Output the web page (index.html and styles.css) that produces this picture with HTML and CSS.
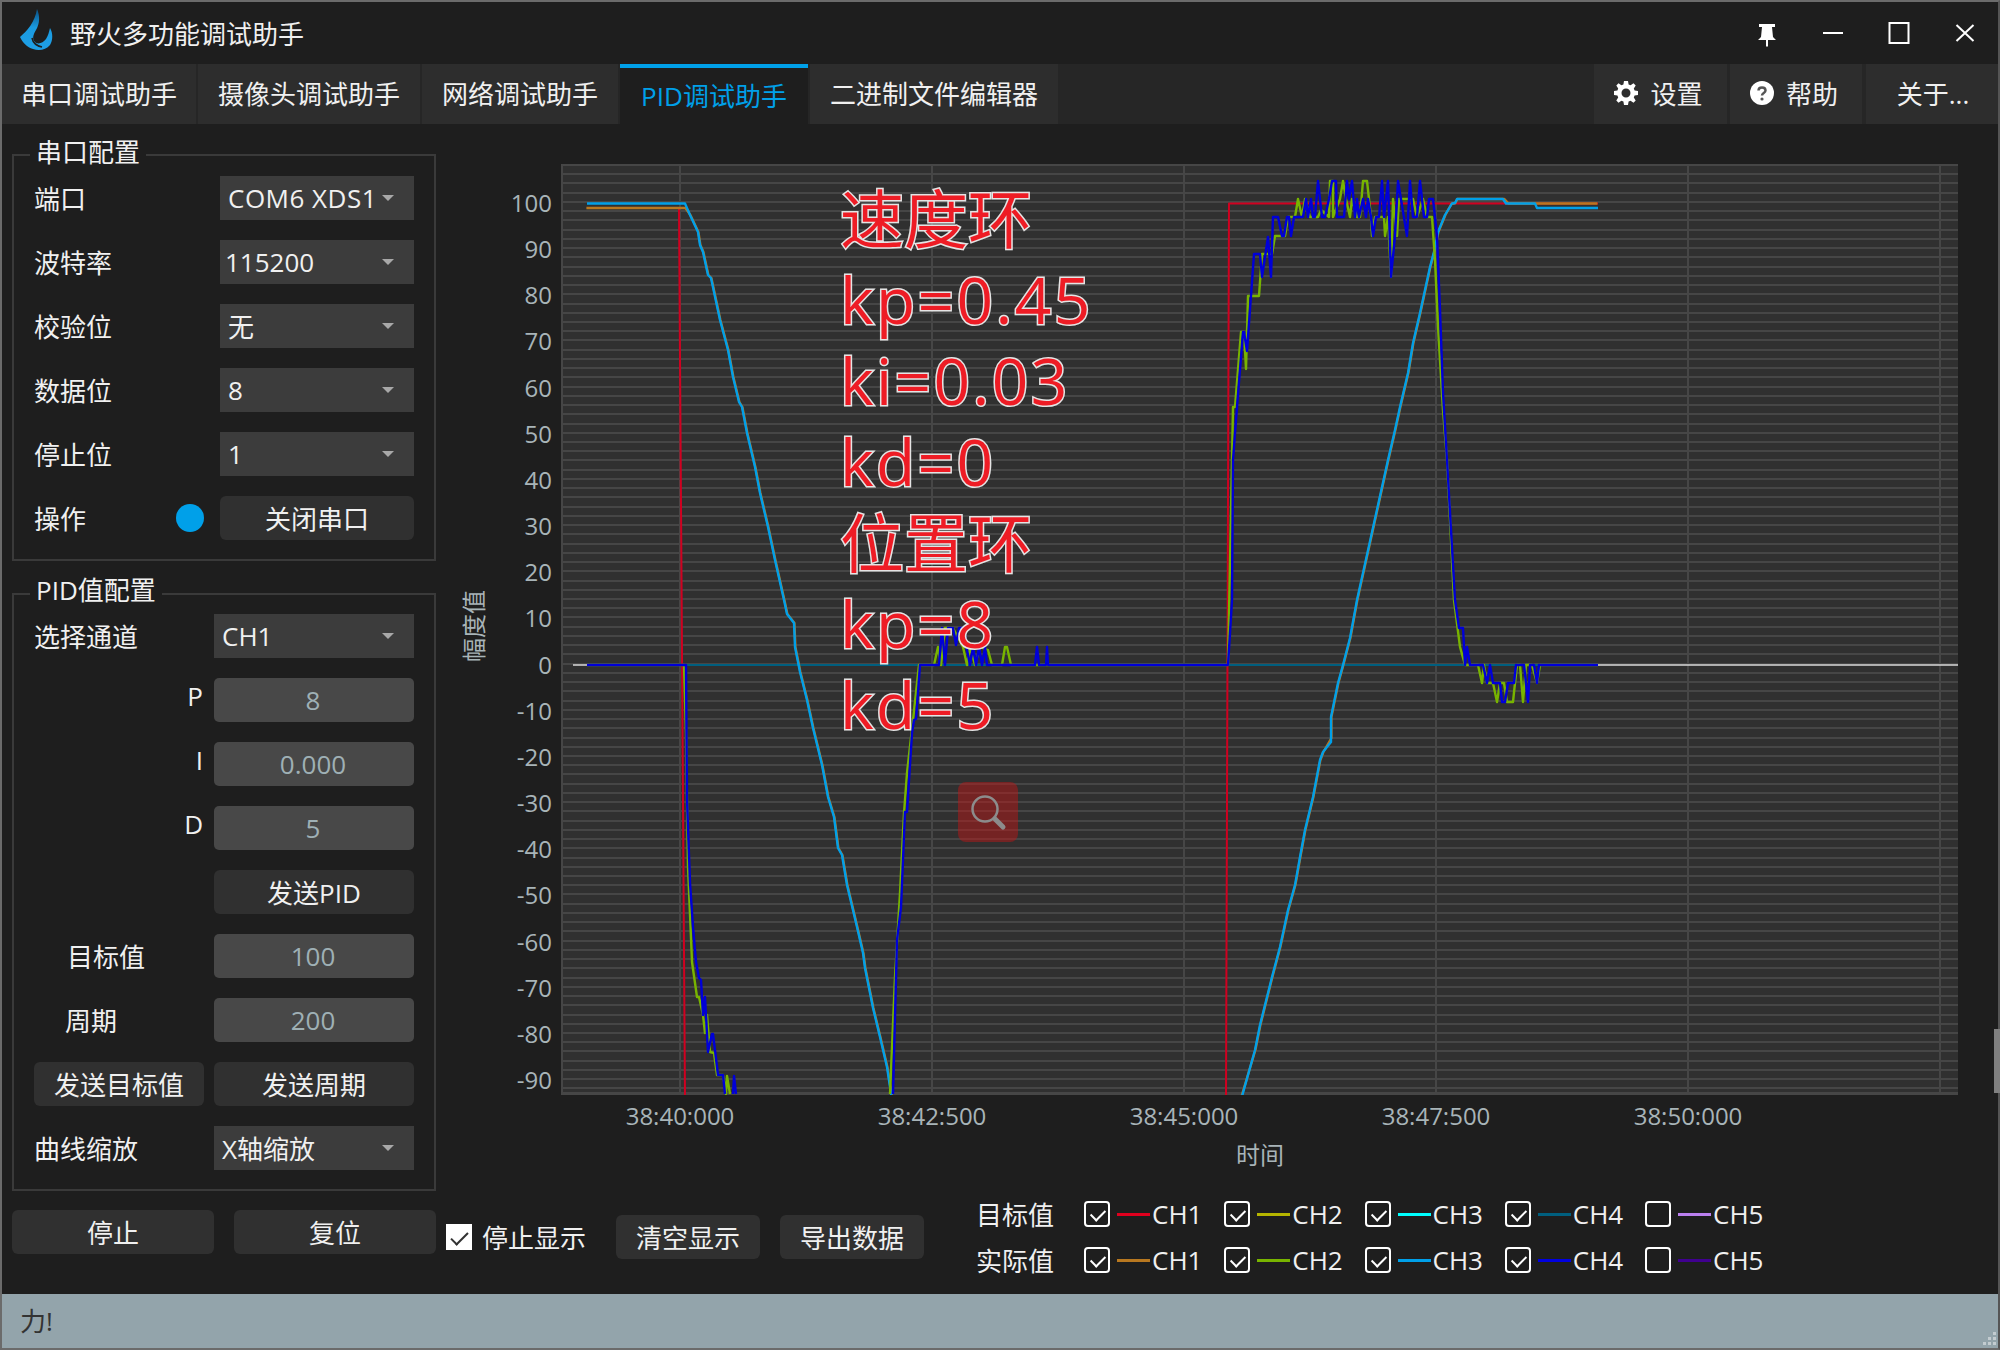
FILE: index.html
```html
<!DOCTYPE html>
<html lang="zh-CN">
<head>
  <meta charset="UTF-8">
  <title>野火多功能调试助手</title>
  <link rel="stylesheet" href="styles.css">
</head>
<body>
  <div class="window">
    <header class="titlebar">
      <svg class="logo" viewBox="0 0 60 60">
        <defs>
          <linearGradient id="flame" x1="0" y1="0" x2="0" y2="1">
            <stop offset="0.1" stop-color="#0d5f96"/>
            <stop offset="0.45" stop-color="#1a9be0"/>
            <stop offset="1" stop-color="#1f9fe6"/>
          </linearGradient>
        </defs>
        <path fill="url(#flame)" d="M27 7C30 14 30 21 26 28C23 33 22 37 25 40C28 43 33 41 36 37C38 34 39 30 40 26C43 31 43 38 40 43C36 48 29 49 23 47C17 45 13 41 10 35C17 29 25 20 27 7z"/>
        <path fill="none" stroke="#1e1e1e" stroke-width="1.500" d="M22 36C23 41 27 44 32 45"/>
      </svg>
      <span class="app-name">野火多功能调试助手</span>
      <div class="win-btns">
        <svg class="win-btn" viewBox="0 0 52 52"><path fill="#fff" d="M18 17h16v3h-3l1 10 3 3H17l3-3 1-10h-3zM25 33h2v6l-1 1-1-1z"/></svg>
        <svg class="win-btn" viewBox="0 0 52 52"><path stroke="#fff" stroke-width="2" d="M16 26h20"/></svg>
        <svg class="win-btn" viewBox="0 0 52 52"><rect x="16.500" y="16" width="19" height="20" fill="none" stroke="#fff" stroke-width="2"/></svg>
        <svg class="win-btn" viewBox="0 0 52 52"><path stroke="#fff" stroke-width="2" d="M17.500 18l17 16M34.500 18l-17 16"/></svg>
      </div>
    </header>

    <nav class="tabbar">
      <div class="tab tab-serial">串口调试助手</div>
      <div class="tab tab-camera">摄像头调试助手</div>
      <div class="tab tab-net">网络调试助手</div>
      <div class="tab tab-pid active">PID调试助手</div>
      <div class="tab tab-bin">二进制文件编辑器</div>
      <div class="tab-actions">
        <div class="tab tab-set">
          <svg class="tab-icon" viewBox="0 0 24 24"><path fill="#fff" fill-rule="evenodd" d="M10 0h4l.6 3.400 2 .8L19.500 2.300l2.200 2.200-1.900 2.900.8 2 3.400.6v4l-3.400.6-.8 2 1.900 2.900-2.200 2.200-2.900-1.900-2 .8L14 24h-4l-.6-3.400-2-.8-2.900 1.900-2.200-2.200 1.900-2.900-.8-2L0 14v-4l3.400-.6.8-2-1.900-2.900 2.200-2.200 2.900 1.900 2-.8zM12 7.500a4.500 4.500 0 1 0 0 9 4.500 4.500 0 0 0 0-9z"/></svg>
          设置
        </div>
        <div class="tab tab-help">
          <svg class="tab-icon" viewBox="0 0 24 24"><circle cx="12" cy="12" r="12" fill="#fff"/><path fill="none" stroke="#555" stroke-width="2.500" d="M8.500 9.500c0-4 7-4 7 0 0 2.500-3.500 2.500-3.500 5"/><circle cx="12" cy="18" r="1.600" fill="#555"/></svg>
          帮助
        </div>
        <div class="tab tab-about">关于...</div>
      </div>
    </nav>

    <main class="content">
      <aside class="side">
        <section class="group group-port">
          <h2 class="group-title">串口配置</h2>
          <div class="form form-port">
            <label class="lbl">端口</label>
            <div class="combo"><span class="combo-text clip">COM6 XDS110 Class</span></div>
            <label class="lbl">波特率</label>
            <div class="combo"><span class="combo-text baud">115200</span></div>
            <label class="lbl">校验位</label>
            <div class="combo"><span class="combo-text">无</span></div>
            <label class="lbl">数据位</label>
            <div class="combo"><span class="combo-text">8</span></div>
            <label class="lbl">停止位</label>
            <div class="combo"><span class="combo-text">1</span></div>
            <div class="lbl lbl-dot">操作<span class="led"></span></div>
            <button class="btn">关闭串口</button>
          </div>
        </section>

        <section class="group group-pid">
          <h2 class="group-title">PID值配置</h2>
          <div class="form form-pid">
            <label class="lbl">选择通道</label>
            <div class="combo"><span class="combo-text">CH1</span></div>
            <label class="lbl lbl-r">P</label>
            <div class="input">8</div>
            <label class="lbl lbl-r">I</label>
            <div class="input">0.000</div>
            <label class="lbl lbl-r">D</label>
            <div class="input">5</div>
            <span></span>
            <button class="btn">发送PID</button>
            <label class="lbl lbl-target">目标值</label>
            <div class="input">100</div>
            <label class="lbl lbl-period">周期</label>
            <div class="input">200</div>
            <button class="btn btn-target">发送目标值</button>
            <button class="btn">发送周期</button>
            <label class="lbl">曲线缩放</label>
            <div class="combo"><span class="combo-text">X轴缩放</span></div>
          </div>
        </section>

        <div class="run-btns">
          <button class="btn">停止</button>
          <button class="btn">复位</button>
        </div>
      </aside>

      <section class="right">
        <div class="chart">
          <div class="chart-top">
            <div class="y-title"><span>幅度值</span></div>
            <div class="y-labels">
              <span>100</span><span>90</span><span>80</span><span>70</span><span>60</span>
              <span>50</span><span>40</span><span>30</span><span>20</span><span>10</span>
              <span>0</span><span>-10</span><span>-20</span><span>-30</span><span>-40</span>
              <span>-50</span><span>-60</span><span>-70</span><span>-80</span><span>-90</span>
            </div>
            <div class="plot">
              <svg class="curves" viewBox="561 164 1397 931">
                <!-- zero axis -->
                <path class="axis-zero" d="M573 665H1958"/>
                <path class="s-teal" d="M587 665H1598"/>
                <!-- target, ch1 -->
                <path class="s-red" d="M587 208H679L685 1100M1226 1100L1229 203.500H1598"/>
                <!-- actual, ch1 and ch3 -->
                <polyline class="s-orange" points="587,208 686,208 691,215 699,232 701,245 704,252 709,275 712,278 721,320 729,350 734,377 740,402 743,407 748,433 756,467 761,493 769,527 776,560 785,600 788,614 795,623 796,647 801,672 808,700 814,728 823,765 829,797 835,817 839,848 843,855 848,885 858,927 864,953 866,968 874,1008 881,1037 888,1067 893,1100"/>
                <polyline class="s-orange" points="1241,1100 1256,1050 1261,1025 1273,977 1281,947 1289,910 1296,885 1301,857 1306,830 1314,797 1321,760 1324,752 1332,738 1332,717 1339,683 1344,665 1351,638 1358,600 1389,460 1396,430 1401,407 1409,373 1414,343 1421,313 1431,267 1436,248 1439,232 1446,215 1452,204 1456,203 1458,199 1505,199 1509,203.500 1598,203.500"/>
                <polyline class="s-sky" points="587,203.500 685,203.500 690,215 698,232 700,245 703,252 708,275 711,278 720,320 728,350 733,377 739,402 742,407 747,433 755,467 760,493 768,527 775,560 784,600 787,614 794,623 795,647 800,672 807,700 813,728 822,765 828,797 834,817 838,848 842,855 847,885 857,927 863,953 865,968 873,1008 880,1037 887,1067 892,1100"/>
                <polyline class="s-sky" points="1241,1100 1255,1050 1260,1025 1272,977 1280,947 1288,910 1295,885 1300,857 1305,830 1313,797 1320,760 1323,752 1331,742 1331,717 1338,683 1343,665 1350,638 1357,600 1388,460 1395,430 1400,407 1408,373 1413,343 1420,313 1430,267 1435,248 1438,232 1445,215 1452,203.500 1455,203 1457,199 1503,199 1506,203.500 1535,203.500 1537,208 1598,208"/>
                <!-- ch2 actual -->
                <polyline class="s-green" points="587,665 684,665 686,733 688,867 692,962 697,997 699,997 703,1015 705,1033 707,1015 710,1052 714,1053 717,1075 723,1075 726,1094 727,1076 730,1094"/>
                <polyline class="s-green" points="890,1094 895,977 900,893 904,813 907,773 913,720 919,665 934,665 938,647 941,665 945,628 953,628 963,647 967,665 970,647 975,665 980,647 988,650 992,665 1002,665 1005,647 1007,647 1011,665 1228,665 1232,460 1233,407 1235,407 1241,332 1244,332 1246,369 1248,296 1259,296 1262,254 1272,254 1275,236 1285,236 1288,217 1295,217 1298,199 1302,217 1305,199 1310,217 1318,217 1321,210 1329,217 1330,181 1333,181 1333,217 1340,199 1343,181 1346,199 1350,217 1352,199 1357,217 1360,217 1363,181 1367,181 1371,217 1372,236 1375,217 1384,217 1385,236 1388,217 1391,277 1393,199 1397,236 1399,199 1413,199 1417,217 1423,199 1427,217 1432,217 1435,260 1438,327 1443,410 1447,460 1454,600 1460,647 1465,665 1478,665 1482,683 1484,665 1487,683 1493,683 1497,702 1500,683 1504,683 1507,702 1513,702 1515,683 1517,665 1520,665 1523,702 1526,665 1530,665 1532,665 1537,683 1540,665 1598,665"/>
                <!-- ch4 actual -->
                <polyline class="s-blue" points="587,665 686,665 687,800 690,883 693,927 696,962 699,978 701,980 703,1015 705,997 708,1052 712,1034 713,1034 718,1075 723,1075 725,1094"/>
                <polyline class="s-blue" points="733,1094 734,1076 736,1094"/>
                <polyline class="s-blue" points="893,1094 897,940 901,907 905,812 907,812 912,733 914,720 916,719 920,665 939,665 942,628 945,665 948,628 953,628 956,645 959,628 964,628 967,650 970,665 973,647 976,665 979,647 982,665 985,647 987,665 1035,665 1037,647 1039,665 1046,665 1047,647 1048,665 1228,665 1230,633 1232,600 1233,460 1237,407 1243,332 1244,332 1247,351 1254,254 1260,254 1262,277 1268,237 1271,277 1273,217 1278,217 1282,236 1284,236 1287,217 1289,217 1291,236 1294,217 1303,217 1306,199 1308,217 1311,199 1313,217 1315,217 1318,181 1322,217 1325,217 1329,199 1332,181 1336,181 1337,217 1344,217 1347,181 1349,199 1352,181 1355,217 1357,199 1359,217 1363,199 1366,217 1368,199 1371,217 1373,236 1376,217 1379,217 1382,181 1384,217 1388,181 1391,277 1395,236 1398,181 1407,236 1410,181 1413,217 1417,217 1420,181 1424,217 1427,217 1429,199 1433,199 1435,217 1437,236 1440,310 1443,393 1447,460 1455,600 1459,628 1463,628 1465,665 1467,647 1470,665 1483,665 1487,683 1490,665 1493,683 1500,683 1502,702 1505,702 1508,683 1514,683 1516,665 1524,665 1528,702 1530,665 1534,665 1537,683 1539,665 1598,665"/>
              </svg>
              <div class="zoom-btn">
                <svg viewBox="0 0 60 60"><circle cx="27" cy="27" r="12.500" fill="none" stroke="#8c8c8c" stroke-width="2.500"/><path d="M37 37l8 8" stroke="#8c8c8c" stroke-width="5" stroke-linecap="round"/></svg>
              </div>
            </div>
          </div>
          <div class="x-labels">
            <span>38:40:000</span><span>38:42:500</span><span>38:45:000</span><span>38:47:500</span><span>38:50:000</span>
          </div>
          <div class="x-title">时间</div>
          <div class="note">速度环<br><span class="note-num">kp=0.45</span><br><span class="note-num">ki=0.03</span><br><span class="note-num">kd=0</span><br>位置环<br><span class="note-num">kp=8</span><br><span class="note-num">kd=5</span></div>
        </div>

        <div class="controls">
          <span class="check check-on"></span>
          <span class="stop-text">停止显示</span>
          <button class="btn btn-ctl">清空显示</button>
          <button class="btn btn-ctl">导出数据</button>
          <div class="legend">
            <span class="legend-name">目标值</span>
            <div class="item"><span class="check ticked"></span><i class="swatch c-red"></i>CH1</div>
            <div class="item"><span class="check ticked"></span><i class="swatch c-yellow"></i>CH2</div>
            <div class="item"><span class="check ticked"></span><i class="swatch c-cyan"></i>CH3</div>
            <div class="item"><span class="check ticked"></span><i class="swatch c-teal"></i>CH4</div>
            <div class="item"><span class="check"></span><i class="swatch c-lilac"></i>CH5</div>
            <span class="legend-name">实际值</span>
            <div class="item"><span class="check ticked"></span><i class="swatch c-orange"></i>CH1</div>
            <div class="item"><span class="check ticked"></span><i class="swatch c-green"></i>CH2</div>
            <div class="item"><span class="check ticked"></span><i class="swatch c-sky"></i>CH3</div>
            <div class="item"><span class="check ticked"></span><i class="swatch c-blue"></i>CH4</div>
            <div class="item"><span class="check"></span><i class="swatch c-purple"></i>CH5</div>
          </div>
        </div>
        <div class="scroll-thumb"></div>
      </section>
    </main>

    <footer class="status">
      <span>力!</span>
      <svg class="grip" viewBox="0 0 14 14"><path fill="#c3ccd0" d="M11 0h3v3h-3zM11 5h3v3h-3zM6 5h3v3H6zM11 10h3v3h-3zM6 10h3v3H6zM1 10h3v3H1z"/></svg>
    </footer>
  </div>
</body>
</html>
```

FILE: styles.css
```css
* {
  box-sizing: border-box;
}

body {
  margin: 0;
  background: #1e1e1e;
  font-family: "Open Sans", "Noto Sans CJK SC", sans-serif;
  color: #f0f0f0;
}

.window {
  width: 2000px;
  height: 1350px;
  display: flex;
  flex-direction: column;
  background: #1e1e1e;
  border: 2px solid #6b6b6b;
  border-right-color: #555;
  font-size: 26px;
}

/* Title bar */
.titlebar {
  height: 62px;
  display: flex;
  align-items: center;
  flex: none;
}

.logo {
  width: 60px;
  height: 60px;
  margin-left: 8px;
  margin-top: -2px;
}

.app-name {
  margin-left: 0;
}

.win-btns {
  margin-left: auto;
  display: flex;
  gap: 14px;
  padding-right: 7px;
}

.win-btn {
  width: 52px;
  height: 52px;
}

/* Tabs */
.tabbar {
  height: 60px;
  flex: none;
  display: flex;
  background: #262626;
}

.tab {
  height: 60px;
  display: flex;
  align-items: center;
  justify-content: center;
  background: #2d2d2d;
  margin-right: 2px;
  padding-bottom: 2px;
}

.tab-serial { width: 194px; }
.tab-camera { width: 222px; }
.tab-net { width: 196px; }
.tab-pid { width: 188px; }
.tab-bin { width: 248px; margin-right: 0; }

.tab.active {
  background: #1e1e1e;
  color: #00a0e9;
  border-top: 4px solid #00a0e9;
}

.tab-actions {
  margin-left: auto;
  display: flex;
}

.tab-set { width: 133px; gap: 12px; margin-right: 3px; padding-right: 4px; }
.tab-help { width: 132px; gap: 12px; margin-right: 4px; padding-right: 4px; }
.tab-about { width: 132px; margin-right: 0; padding-left: 2px; }

.tab-icon {
  width: 24px;
  height: 24px;
}

/* Main area */
.content {
  flex: 1;
  display: flex;
  min-height: 0;
}

.side {
  width: 434px;
  flex: none;
  padding: 30px 0 0 10px;
}

.group {
  position: relative;
  border: 2px solid #3a3a3a;
}

.group-title {
  position: absolute;
  top: -21px;
  left: 16px;
  margin: 0;
  padding: 0 6px;
  background: #1e1e1e;
  font-size: 26px;
  font-weight: normal;
  line-height: 34px;
}

.group-port {
  height: 407px;
  margin-bottom: 32px;
}

.group-pid {
  height: 598px;
}

.group-pid .group-title {
  top: -22px;
}

.form {
  display: grid;
  grid-auto-rows: 44px;
  row-gap: 20px;
  padding-left: 20px;
}

.form-port {
  grid-template-columns: 186px 194px;
  padding-top: 20px;
}

.form-pid {
  grid-template-columns: 180px 200px;
  padding-top: 19px;
}

.lbl {
  display: flex;
  align-items: center;
}

.lbl-r {
  justify-content: flex-end;
  padding: 0 11px 8px 0;
}

.lbl-target { padding-left: 33px; }
.lbl-period { padding-left: 31px; }

.lbl-dot {
  justify-content: space-between;
  padding-right: 16px;
}

.led {
  width: 28px;
  height: 28px;
  border-radius: 50%;
  background: #00a0e9;
}

.combo {
  position: relative;
  display: flex;
  align-items: center;
  background: #3c3c3c;
  padding-left: 8px;
}

.combo::after {
  content: "";
  position: absolute;
  right: 20px;
  top: 19px;
  border-left: 6px solid transparent;
  border-right: 6px solid transparent;
  border-top: 6px solid #a8a8a8;
}

.combo-text {
  white-space: nowrap;
}

.clip {
  width: 148px;
  overflow: hidden;
  letter-spacing: 0.5px;
}

.baud {
  margin-left: -3px;
}

.input {
  display: flex;
  align-items: center;
  justify-content: center;
  background: #484848;
  border-radius: 5px;
  color: #9fb0b5;
  padding-right: 2px;
}

.btn {
  height: 44px;
  border: none;
  padding: 0;
  border-radius: 6px;
  background: #303030;
  color: #f0f0f0;
  font: inherit;
}

.btn-target {
  width: 170px;
}

.run-btns {
  display: flex;
  justify-content: space-between;
  width: 424px;
  margin-top: 19px;
}

.run-btns .btn {
  width: 202px;
}

/* Chart */
.right {
  position: relative;
  flex: 1;
  min-width: 0;
}

.chart {
  position: relative;
  height: 1072px;
  padding-top: 40px;
}

.chart-top {
  display: flex;
  height: 931px;
}

.y-title {
  width: 72px;
  flex: none;
  padding: 447px 0 0 4px;
  text-align: center;
  color: #a8b4b8;
  font-size: 24px;
  line-height: 34px;
}

.y-title span {
  display: block;
  white-space: nowrap;
  transform: rotate(-90deg);
}

.y-labels {
  width: 44px;
  flex: none;
  display: grid;
  grid-auto-rows: 46.17px;
  padding-top: 16px;
  text-align: right;
  color: #a8b4b8;
  font-size: 24px;
  line-height: 46.17px;
  margin-right: 9px;
  white-space: nowrap;
}

.plot {
  position: relative;
  width: 1397px;
  flex: none;
  background-color: #303030;
  background-image:
    repeating-linear-gradient(to right, #464646 0 2px, transparent 2px 252px),
    repeating-linear-gradient(to bottom, #464646 0 2px, transparent 2px 9.234px);
  background-position: 116px 0, 0 0;
  border-left: 2px solid #464646;
  border-bottom: 3px solid #464646;
}

.curves {
  position: absolute;
  left: -2px;
  top: 0;
  width: 1397px;
  height: 931px;
  overflow: hidden;
  fill: none;
  stroke-width: 2.400;
  stroke-linejoin: round;
}

.axis-zero { stroke: #d8d8d8; stroke-width: 1.500; }
.s-teal { stroke: #005f7f; stroke-width: 2; }
.s-red { stroke: #d00020; stroke-width: 2; }
.s-orange { stroke: #b87820; transform: translateX(-0.6px); }
.s-sky { stroke: #00a0e9; }
.s-green { stroke: #78b400; }
.s-blue { stroke: #0000d8; }

.zoom-btn {
  position: absolute;
  left: 395px;
  top: 618px;
  width: 60px;
  height: 60px;
  border-radius: 8px;
  background: rgba(200, 20, 20, 0.45);
}

.zoom-btn svg {
  display: block;
  width: 60px;
  height: 60px;
}

.x-labels {
  display: flex;
  margin-left: 118px;
  padding-top: 2px;
  color: #a8b4b8;
  font-size: 24px;
  height: 41px;
  line-height: 38px;
}

.x-labels span {
  width: 252px;
  flex: none;
  text-align: center;
}

.x-title {
  padding-left: 800px;
  color: #a8b4b8;
  font-size: 24px;
  line-height: 38px;
}

.note {
  position: absolute;
  left: 404px;
  top: 54px;
  font-size: 64px;
  line-height: 81px;
  color: #ee1c25;
  -webkit-text-stroke: 3px #e4e4e4;
  paint-order: stroke fill;
  white-space: nowrap;
}

.note-num {
  letter-spacing: 2.400px;
}

/* Bottom controls */
.controls {
  display: flex;
  align-items: center;
  height: 82px;
  padding-left: 10px;
}

.check {
  position: relative;
  flex: none;
  width: 26px;
  height: 26px;
  border: 2px solid #fff;
  border-radius: 4px;
}

.check-on {
  background: #fff;
  border-radius: 0;
}

.check-on::after,
.ticked::after {
  content: "";
  position: absolute;
  left: 5px;
  top: 6px;
  width: 12px;
  height: 7px;
  border-left: 2px solid #fff;
  border-bottom: 2px solid #fff;
  transform: rotate(-45deg);
}

.check-on::after {
  left: 3px;
  width: 15px;
  border-color: #333;
}

.stop-text {
  margin-left: 10px;
  margin-right: 30px;
}

.btn-ctl {
  width: 144px;
  margin-right: 20px;
}

.legend {
  display: grid;
  grid-template-columns: 108px repeat(5, 140.250px);
  grid-auto-rows: 26px;
  row-gap: 20px;
  margin-left: 32px;
  align-items: center;
}

.item {
  display: flex;
  align-items: center;
}

.swatch {
  width: 33px;
  height: 3px;
  margin: 0 2px 0 7px;
}

.c-red { background: #e0001e; }
.c-yellow { background: #b5b500; }
.c-cyan { background: #00ffff; }
.c-teal { background: #005f7f; }
.c-lilac { background: #bb80f0; }
.c-orange { background: #b87820; }
.c-green { background: #78b400; }
.c-sky { background: #00a0e9; }
.c-blue { background: #0000e0; }
.c-purple { background: #400090; }

.scroll-thumb {
  position: absolute;
  right: -2px;
  top: 905px;
  width: 6px;
  height: 64px;
  background: #808080;
}

/* Status bar */
.status {
  position: relative;
  height: 54px;
  flex: none;
  display: flex;
  align-items: center;
  padding: 0 0 3px 18px;
  background: #93a4ab;
  color: #333;
}

.grip {
  position: absolute;
  right: 2px;
  bottom: 2px;
  width: 14px;
  height: 14px;
}
```
